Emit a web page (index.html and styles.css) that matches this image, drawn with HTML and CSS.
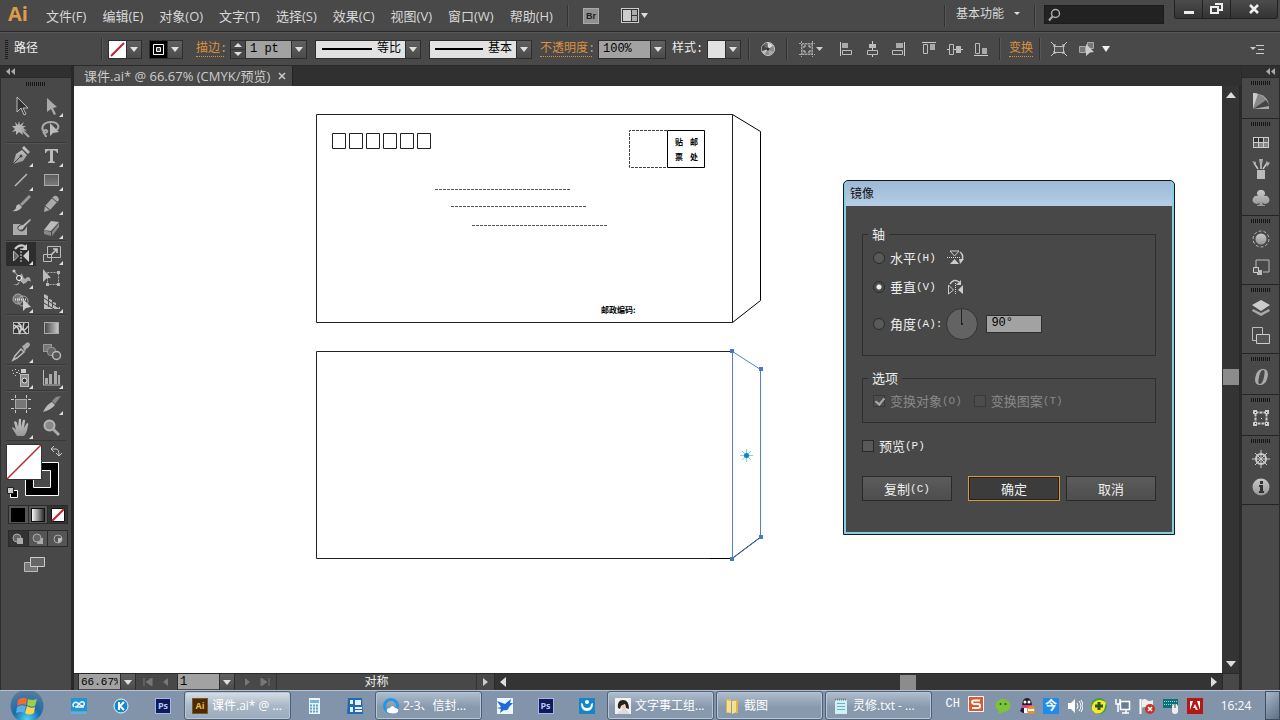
FILE: index.html
```html
<!DOCTYPE html>
<html lang="zh-CN">
<head>
<meta charset="utf-8">
<title>课件.ai</title>
<link rel="stylesheet" href="styles.css">
</head>
<body>
<svg class="defs" aria-hidden="true">
  <defs>
    <linearGradient id="metal" x1="0" y1="0" x2="0" y2="1"><stop offset="0" stop-color="#c8c8c8"/><stop offset="1" stop-color="#969696"/></linearGradient>
    <linearGradient id="dim" x1="0" y1="0" x2="0" y2="1"><stop offset="0" stop-color="#5c5c5c"/><stop offset="1" stop-color="#7c7c7c"/></linearGradient>
    <linearGradient id="ramp"><stop offset="0" stop-color="#fff"/><stop offset="1" stop-color="#222"/></linearGradient>
    <linearGradient id="ramp2"><stop offset="0" stop-color="#444"/><stop offset="1" stop-color="#ccc"/></linearGradient>
    <radialGradient id="orb" cx=".5" cy=".9" r=".9"><stop offset="0" stop-color="#4fd2f4"/><stop offset=".45" stop-color="#1c6ca8"/><stop offset="1" stop-color="#5e7d9b"/></radialGradient>
  </defs>
</svg>

<header class="menubar">
  <div class="logo">Ai</div>
  <nav class="menus">
    <button>文件(F)</button><button>编辑(E)</button><button>对象(O)</button><button>文字(T)</button><button>选择(S)</button><button>效果(C)</button><button>视图(V)</button><button>窗口(W)</button><button>帮助(H)</button>
  </nav>
  <span class="rule"></span>
  <button class="bridge">Br</button>
  <button class="arrange" aria-label="排列文档"><svg width="28" height="16"><rect x=".5" y=".5" width="17" height="14" fill="#333" stroke="#ccc"/><rect x="2" y="2" width="8" height="11" fill="#ccc"/><rect x="11" y="2" width="5" height="5" fill="#aaa"/><rect x="11" y="8" width="5" height="5" fill="#aaa"/><path d="M20 5h7l-3.500 5z" fill="#ddd"/></svg></button>
  <span class="grow"></span>
  <span class="rule"></span>
  <button class="workspace">基本功能<i class="tri small"></i></button>
  <span class="rule"></span>
  <label class="search"><svg width="14" height="14"><circle cx="8.500" cy="5.500" r="4" fill="none" stroke="#aaa" stroke-width="1.500"/><path d="M5.500 8.500L2 12.500" stroke="#aaa" stroke-width="2"/></svg><input type="text" aria-label="搜索"></label>
  <div class="winbtns">
    <button aria-label="最小化"><svg width="12" height="12"><path d="M1 8h10v3H1z" fill="#eee"/></svg></button>
    <button aria-label="还原"><svg width="14" height="12"><path d="M5 1h7v6H9M1 4h7v6H1z" fill="none" stroke="#eee" stroke-width="2"/></svg></button>
    <button class="close" aria-label="关闭"><svg width="12" height="12"><path d="M2 2l8 8M10 2l-8 8" stroke="#eee" stroke-width="2.500"/></svg></button>
  </div>
</header>

<section class="controlbar">
  <i class="vgrip"></i>
  <span class="kind">路径</span>
  <span class="rule"></span>
  <div class="combo"><button class="swatch" aria-label="填色"><svg width="17" height="17"><path fill="#fff" d="M0 0h17v17H0z"/><path d="M2 15L15 2" stroke="#c22030" stroke-width="2"/></svg></button><button class="drop" aria-label="填色选项"><i class="tri"></i></button></div>
  <div class="combo"><button class="swatch" aria-label="描边颜色"><svg width="17" height="17"><path d="M0 0h17v17H0z"/><path d="M3.500 3.500h10v10h-10z" fill="#000" stroke="#fff"/><path d="M6.500 6.500h4v4h-4z" fill="#555" stroke="#fff"/></svg></button><button class="drop" aria-label="描边选项"><i class="tri"></i></button></div>
  <a class="link stroke-link" href="#stroke">描边:</a>
  <div class="combo weight"><button class="spin" aria-label="增减"><svg width="14" height="17"><path d="M3 6h8L7 2zM3 11h8l-4 4z" fill="#ddd"/><path d="M0 8.500h14" stroke="#333"/></svg></button><input class="w-weight" value="1 pt" aria-label="粗细"><button class="drop" aria-label="粗细列表"><i class="tri"></i></button></div>
  <label class="picker"><svg width="50" height="4"><path d="M0 1h50v2H0z"/></svg><select aria-label="宽度配置"><option>等比</option></select><span class="drop"><i class="tri"></i></span></label>
  <label class="picker brush"><svg width="48" height="4"><path d="M0 1h48v2H0z"/></svg><select aria-label="画笔"><option>基本</option></select><span class="drop"><i class="tri"></i></span></label>
  <a class="link opacity-link" href="#opacity">不透明度:</a>
  <div class="combo"><input class="w-opacity" value="100%" aria-label="不透明度"><button class="drop" aria-label="不透明度列表"><i class="tri"></i></button></div>
  <span class="stylelabel">样式:</span>
  <div class="combo"><button class="swatch style" aria-label="图形样式"></button><button class="drop" aria-label="样式列表"><i class="tri"></i></button></div>
  <span class="rule"></span>
  <button class="tb wide" aria-label="重新着色"><svg width="18" height="18"><circle cx="9" cy="9" r="6.500" fill="#888" stroke="#ccc"/><path d="M9 9L9 3A6 6 0 0 1 14 6z" fill="#d8d8d8"/><path d="M9 9L3 11A6 6 0 0 0 6 14z" fill="#c0c0c0"/><path d="M9 9L4 5A6 6 0 0 1 8 3z" fill="#666"/><path d="M9 9l5 3a6 6 0 0 1-4 3z" fill="#aaa"/><path d="M9 9L3 11A6 6 0 0 1 4 5z" fill="#444"/><circle cx="9" cy="9" r="1.500" fill="#333"/></svg></button>
  <span class="rule"></span>
  <button class="tb artb" aria-label="对齐画板"><svg width="26" height="18"><path d="M1 3.500h16M1 14.500h16M3.500 1v16M14.500 1v16" stroke="#aaa" stroke-dasharray="2 1"/><path d="M4 4h10v10H4z" fill="#4a4a4a" stroke="#999"/><path d="M6 8V6h2M10 6h2v2M12 10v2h-2M8 12H6v-2" fill="none" stroke="#ccc"/><path d="M18 7h7l-3.500 4z" fill="#ccc"/></svg></button>
  <div class="aligns">
    <button class="tb" aria-label="左对齐"><svg width="18" height="18"><path d="M3.500 2v14" stroke="#ccc"/><path d="M5 3h6v5H5z" fill="#aaa"/><path d="M5.500 10.500h9v4h-9z" fill="none" stroke="#bbb"/></svg></button>
    <button class="tb" aria-label="水平居中"><svg width="18" height="18"><path d="M9.500 1v16" stroke="#ccc"/><path d="M6 4h7v4H6z" fill="#bbb"/><path d="M4.500 10.500h10v4h-10z" fill="#4a4a4a" stroke="#bbb"/></svg></button>
    <button class="tb" aria-label="右对齐"><svg width="18" height="18"><path d="M15.500 2v14" stroke="#ccc"/><path d="M7 3h7v5H7z" fill="#aaa"/><path d="M3.500 10.500h10v4h-10z" fill="none" stroke="#bbb"/></svg></button>
  </div>
  <div class="aligns second">
    <button class="tb" aria-label="顶对齐"><svg width="18" height="18"><path d="M2 2.500h14" stroke="#ccc"/><path d="M3.500 4.500h4v9h-4z" fill="none" stroke="#bbb"/><path d="M10 4h5v6h-5z" fill="#aaa"/></svg></button>
    <button class="tb" aria-label="垂直居中"><svg width="18" height="18"><path d="M1 9.500h16" stroke="#ccc"/><path d="M3.500 4.500h4v10h-4z" fill="#4a4a4a" stroke="#bbb"/><path d="M10 6h5v7h-5z" fill="#bbb"/></svg></button>
    <button class="tb" aria-label="底对齐"><svg width="18" height="18"><path d="M2 15.500h14" stroke="#ccc"/><path d="M3.500 3.500h4v10h-4z" fill="none" stroke="#bbb"/><path d="M10 8h5v6h-5z" fill="#aaa"/></svg></button>
  </div>
  <span class="rule"></span>
  <a class="link transform-link" href="#transform">变换</a>
  <span class="rule"></span>
  <button class="tb iso" aria-label="隔离"><svg width="18" height="18"><path d="M4.500 6.500h9v6h-9z" fill="#555" stroke="#bbb"/><path d="M1 2l4 4M17 2l-4 4M1 16l4-4M17 16l-4-4M3 6h2V4M15 6h-2V4M3 12h2v2M15 12h-2v2" stroke="#ccc" fill="none"/></svg></button>
  <button class="tb similar" aria-label="选择类似对象"><svg width="34" height="18"><path d="M1.500 6.500h6v6h-6z" fill="#777" stroke="#aaa"/><path d="M9.500 2.500h6v6h-6z" fill="#777" stroke="#aaa"/><path d="M8 4l8 8-4 .5L8 16z" fill="#ccc"/><path d="M24 6h8l-4 6z" fill="#eee"/></svg></button>
  <span class="grow"></span>
  <button class="tb flyout" aria-label="面板菜单"><svg width="18" height="18"><path d="M2 7h6l-3 3z" fill="#ccc"/><path d="M8 5.500h8M10 9.500h6M8 13.500h8" stroke="#ccc"/></svg></button>
</section>

<main class="work">
  <aside class="tools">
    <div class="dockhead"><svg width="10" height="8"><path d="M4 0v7L0 3.500zM9 0v7L5 3.500z" fill="#aaa"/></svg></div>
    <i class="grip"></i>
    <div class="group">
      <button aria-label="选择"><svg class="ico"><path d="M8 3v15l4-4 3 7 2-1-3-6h5z" fill="#333" stroke="#bbb"/></svg></button>
      <button class="fly" aria-label="直接选择"><svg class="ico"><path d="M8 4v14l4-3 3 6 2-1-3-6 4-1z" fill="#aaa"/></svg></button>
      <button aria-label="魔棒"><svg class="ico"><path d="M10 3l1 4 4-3-2 4 4 0-3 2 4 3-5-1 1 5-4-3-3 3 0-4-4 1 3-3-3-3 4 0-1-4 3 3z" fill="#b5b5b5"/><path d="M12 11l8 8" stroke="#aaa" stroke-width="2"/></svg></button>
      <button aria-label="套索"><svg class="ico"><path d="M7 15C0 11 4 4 12 4s9 6 5 8M7 15c3-2 0-4-2-2s2 3 2 6" fill="none" stroke="#aaa" stroke-width="2"/><path d="M11 5v13l3-3 6-1z" fill="#bbb"/></svg></button>
    </div>
    <div class="group">
      <button class="fly" aria-label="钢笔"><svg class="ico"><path d="M4 20l3-10 6-4 5 5-4 6zM13 4l2-2 6 6-2 2z" fill="url(#metal)"/><path d="M4 20l7-7" stroke="#444"/><circle cx="12" cy="12" r="1.500" fill="#444"/></svg></button>
      <button class="fly" aria-label="文字"><svg class="ico"><path d="M6 5h13v4h-1q-.5-2.500-3-2.500h-1V17l2 1v1H9v-1l2-1V6.500h-1Q7.500 6.500 7 9H6z" fill="#bbb"/></svg></button>
      <button class="fly" aria-label="直线段"><svg class="ico"><path d="M6 18L18 6" stroke="#bbb" stroke-width="1.500"/></svg></button>
      <button class="fly" aria-label="矩形"><svg class="ico"><rect x="5.500" y="6.500" width="14" height="11" fill="url(#dim)" stroke="#aaa"/></svg></button>
      <button aria-label="画笔"><svg class="ico"><path d="M20 3l2 2-9 9-2-2z" fill="#999"/><path d="M10 12l3 3q-3 5-10 4 4-1 4-4 0-2 3-3z" fill="#bbb"/></svg></button>
      <button class="fly" aria-label="铅笔"><svg class="ico"><path d="M5 20l1-6L15 4q4-1 5 4L11 18z" fill="#aaa"/><path d="M6 14l5 4M13 6l5 4" stroke="#444"/></svg></button>
      <button aria-label="斑点画笔"><svg class="ico"><path d="M4 8h8q-7 4-1 7 4 2 7-5v9H4z" fill="#aaa"/><path d="M9 13q1-4 5-4l7-6 1 1-7 7q-1 4-6 2z" fill="#bbb"/></svg></button>
      <button class="fly" aria-label="橡皮擦"><svg class="ico"><path d="M5 14l7-9 8 1-8 9z" fill="#bbb"/><path d="M5 14l7 2v4l-7-2zM13 16l7-9v4l-7 9z" fill="#888"/></svg></button>
    </div>
    <div class="group">
      <button class="fly active" aria-label="镜像"><svg class="ico"><path d="M4.500 9v10l5-5z" fill="#666" stroke="#bbb"/><path d="M20 8v12l-6-6z" fill="#ccc"/><path d="M12 6v15" stroke="#ddd" stroke-dasharray="2 1"/><path d="M6 7q5-6 11-2" fill="none" stroke="#ccc" stroke-width="2"/><path d="M18 2v6h-6z" fill="#ccc"/></svg></button>
      <button class="fly" aria-label="比例缩放"><svg class="ico"><path d="M8.500 4.500h13v11h-13zM4.500 12.500h8v7h-8z" fill="none" stroke="#bbb"/><path d="M12 13l6-6M14 7h4v4" fill="none" stroke="#ccc" stroke-width="1.500"/></svg></button>
      <button class="fly" aria-label="宽度"><svg class="ico"><path d="M4 18q6 2 7-6 1-8 3-2 1 4 3 2 4-3 5 4-3-3-5 1-4 1-6-3-1 8-7 4z" fill="#aaa"/><path d="M5 5l10 13" stroke="#bbb"/><circle cx="5" cy="5" r="1.500" fill="#ccc"/><circle cx="10" cy="12" r="2.500" fill="#444" stroke="#fff"/></svg></button>
      <button aria-label="自由变换"><svg class="ico"><path d="M8.500 6.500h11v12h-11z" fill="none" stroke="#aaa" stroke-dasharray="2 1"/><path d="M18 5h3v3h-3zM18 17h3v3h-3zM7 17h3v3H7zM4 3l8 9-4 0-4 4z" fill="#bbb"/></svg></button>
      <button class="fly" aria-label="形状生成器"><svg class="ico"><circle cx="9" cy="9" r="5" fill="#777" stroke="#aaa"/><circle cx="14" cy="11" r="5" fill="none" stroke="#aaa"/><path d="M6 9.500h11" stroke="#ddd" stroke-dasharray="1 1" stroke-width="2"/><path d="M14 9v12l3-3 5-1z" fill="#ccc"/></svg></button>
      <button class="fly" aria-label="透视网格"><svg class="ico"><path d="M5 4l4 2v13H5zM10 9l3 1v9h-3zM14 12l3 1v6h-3zM5 17h16v2H5z" fill="#bbb"/><path d="M5 8l15 10M5 13l10 6" stroke="#444"/></svg></button>
    </div>
    <div class="group">
      <button aria-label="网格"><svg class="ico"><rect x="4.500" y="6.500" width="15" height="11" fill="#333" stroke="#bbb"/><path d="M5 13q4-6 7-1t7-2M9 7q6 3 1 11M15 7q-3 7 3 11M5 9q6 3 5 8" fill="none" stroke="#ccc" stroke-width="1.500"/></svg></button>
      <button aria-label="渐变"><svg class="ico"><rect x="5.500" y="6.500" width="14" height="11" fill="url(#ramp2)" stroke="#aaa"/></svg></button>
      <button class="fly" aria-label="吸管"><svg class="ico"><path d="M13 6l2-1q4-5 6-1 0 3-4 5l-1 3z" fill="#aaa"/><path d="M12 9l3 3-7 6-4 2 2-4z" fill="none" stroke="#bbb" stroke-width="1.500"/></svg></button>
      <button aria-label="混合"><svg class="ico"><rect x="4.500" y="4.500" width="8" height="7" fill="#777" stroke="#999"/><rect x="8.500" y="7.500" width="8" height="8" rx="3" fill="#666" stroke="#999"/><circle cx="17.500" cy="15.500" r="4" fill="#555" stroke="#bbb" stroke-width="1.500"/></svg></button>
    </div>
    <div class="group">
      <button class="fly" aria-label="符号喷枪"><svg class="ico"><path d="M3 4h1v1H3zM6 3h1v1H6zM9 4h1v1H9zM4 7h1v1H4zM7 6h2v1H7zM10 7h1v1h-1zM6 9h1v1H6z" fill="#ccc"/><path d="M12 3h5v4h-5z" fill="#ccc"/><rect x="11.500" y="8.500" width="8" height="12" fill="#888" stroke="#bbb"/><circle cx="15.500" cy="14.500" r="2.500" fill="#333" stroke="#eee"/></svg></button>
      <button class="fly" aria-label="柱形图"><svg class="ico"><path d="M4.500 4v15h17" fill="none" stroke="#bbb"/><path d="M6 12h3v6H6zM10 8h3v10h-3zM15 5h3v13h-3zM19 9h2v9h-2z" fill="#aaa"/></svg></button>
    </div>
    <div class="group">
      <button aria-label="画板"><svg class="ico"><rect x="6.500" y="7.500" width="11" height="9" fill="#777" stroke="#aaa"/><path d="M2 7.500h3M19 7.500h3M2 16.500h3M19 16.500h3M6.500 3v3M17.500 3v3M6.500 18v3M17.500 18v3" stroke="#ccc"/></svg></button>
      <button class="fly" aria-label="切片"><svg class="ico"><path d="M4 20q4-8 9-10l3 3q-4 5-12 7z" fill="#bbb"/><path d="M13 9l4-4 5-1-6 8z" fill="#888"/></svg></button>
      <button class="fly" aria-label="抓手"><svg class="ico"><path d="M8 20q-3-5-5-8 1-2 4 2L5 6q2-2 3 1l1 4 1-8q2-1 2 1v7l2-7q2-1 2 1l-1 7 3-5q2 0 1 2-1 8-4 11z" fill="url(#metal)"/></svg></button>
      <button aria-label="缩放"><svg class="ico"><circle cx="10.500" cy="9.500" r="5" fill="#888" stroke="#b5b5b5" stroke-width="2"/><path d="M14 13l6 6" stroke="#aaa" stroke-width="3"/></svg></button>
    </div>
    <svg class="fillstroke" width="60" height="60">
      <path d="M19.500 20.500h33v33h-33z" fill="#000" stroke="#fff"/><path d="M27.500 28.500h17v17h-17z" fill="#4a4a4a" stroke="#fff"/>
      <path d="M.5 2.500h35v35H.5z" fill="#fff" stroke="#333"/><path d="M1 37L35 3" stroke="#c22030" stroke-width="1.500"/>
      <path d="M45 7h5q3 0 3 6M48 4l-3 3 3 3M50 11l3 3 3-3" fill="none" stroke="#ccc"/>
      <path d="M4.500 48.500h7v7h-7z" stroke="#fff"/><path d="M1.500 45.500h6v6h-6z" fill="#ccc" stroke="#222"/>
    </svg>
    <div class="trio colors">
      <button aria-label="颜色"><svg width="14" height="14"><path d="M0 0h14v14H0z"/></svg></button>
      <button aria-label="渐变"><svg width="14" height="14"><rect x=".5" y=".5" width="13" height="13" fill="url(#ramp)" stroke="#111"/></svg></button>
      <button class="on" aria-label="无"><svg width="14" height="14"><path d="M.5.5h13v13H.5z" fill="#fff" stroke="#111"/><path d="M1 13L13 1" stroke="#c22030" stroke-width="2"/></svg></button>
    </div>
    <div class="trio modes">
      <button class="on" aria-label="正常绘图"><svg width="14" height="12"><circle cx="6" cy="5" r="4" fill="#666" stroke="#aaa"/><path d="M6 5h6v6H6z" fill="#aaa"/></svg></button>
      <button aria-label="背面绘图"><svg width="14" height="12"><path d="M7 5h5v6H6z" fill="#aaa"/><circle cx="6" cy="5" r="4" fill="#666" stroke="#aaa"/></svg></button>
      <button aria-label="内部绘图"><svg width="14" height="12"><circle cx="7" cy="6" r="4" fill="#555" stroke="#aaa"/><path d="M7 5h4q0 4-4 5z" fill="#bbb"/></svg></button>
    </div>
    <button class="screenmode" aria-label="屏幕模式"><svg width="22" height="16"><path d="M.5 5.500h13v9H.5z" fill="#777" stroke="#bbb"/><path d="M6.500.5h14v9h-14z" fill="#666" stroke="#ccc"/></svg></button>
  </aside>

  <section class="document">
    <div class="tabs"><div class="tab"><span>课件.ai* @ 66.67% (CMYK/预览)</span><button aria-label="关闭文档"><svg width="8" height="8"><path d="M1 1l6 6M7 1L1 7" stroke="#ccc" stroke-width="1.500"/></svg></button></div></div>
    <div class="viewport">
      <svg class="canvas">
        <g transform="translate(-74 -86)" fill="none" stroke="#222">
          <path d="M316.500 114.500h416v208h-416z"/>
          <path d="M732.500 114.500l28 17v169l-28 22" stroke="#000"/>
          <path d="M332.500 133.500h13v15h-13zM349.500 133.500h13v15h-13zM366.500 133.500h13v15h-13zM383.500 133.500h13v15h-13zM400.500 133.500h13v15h-13zM417.500 133.500h13v15h-13z"/>
          <path d="M667 130.500h-37.500v37H667" stroke="#444" stroke-dasharray="3 1"/>
          <path d="M667.500 130.500h37v37h-37z" stroke="#000"/>
          <path d="M435 189.500h136M451 206.500h136M472 225.500h136" stroke="#555" stroke-dasharray="3 1"/>
          <g class="print" fill="#000" stroke="none"><text x="675" y="145">贴</text><text x="690" y="145">邮</text><text x="675" y="160">票</text><text x="690" y="160">处</text><text x="601" y="313">邮政编码:</text></g>
          <path d="M732 351.500H316.500v207h416"/>
          <path d="M710 558.500h22l28-21" stroke="#000"/>
          <path d="M732.500 351.500l28 18v168l-28 21z" stroke="#5580c0"/>
          <path d="M730 349h4v4h-4zM759 367h4v4h-4zM759 535h4v4h-4zM730 557h4v4h-4z" fill="#4479c8" stroke="none"/>
          <path d="M740 455.500h13M746.500 449v13M742 451l9 9M751 451l-9 9" stroke="#7fd0f0"/><circle cx="746.500" cy="455.500" r="2.500" fill="#0884c0" stroke="none"/>
        </g>
      </svg>
      <div class="vscroll"><svg width="12" height="8"><path d="M1 7h10L6 1z" fill="#ddd"/></svg><i class="thumb"></i><svg width="12" height="8"><path d="M1 1h10L6 7z" fill="#ddd"/></svg></div>
    </div>
    <footer class="status">
      <div class="combo"><input class="w-zoom" value="66.67%" aria-label="缩放"><button class="drop" aria-label="缩放列表"><i class="tri"></i></button></div>
      <div class="pager"><button aria-label="首页"><svg width="10" height="8"><path d="M1 0v8M9 0v8L3 4z" fill="#777" stroke="#777"/></svg></button><button aria-label="上一页"><svg width="10" height="8"><path d="M7 0v8L2 4z" fill="#777"/></svg></button></div>
      <div class="combo"><input class="w-page" value="1" aria-label="画板"><button class="drop" aria-label="画板列表"><i class="tri"></i></button></div>
      <div class="pager"><button aria-label="下一页"><svg width="10" height="8"><path d="M3 0v8l5-4z" fill="#777"/></svg></button><button aria-label="末页"><svg width="10" height="8"><path d="M9 0v8M1 0v8l6-4z" fill="#777" stroke="#777"/></svg></button></div>
      <span class="toolname">对称</span>
      <button class="more" aria-label="状态选项"><svg width="8" height="10"><path d="M1 1v8l5-4z" fill="#ccc"/></svg></button>
      <div class="hscroll"><svg width="8" height="10"><path d="M7 0v10L1 5z" fill="#ddd"/></svg><i class="thumb"></i><svg width="8" height="10"><path d="M1 0v10l6-5z" fill="#ddd"/></svg></div>
      <span class="corner"></span>
    </footer>
  </section>

  <aside class="dock">
    <div class="dockhead right"><svg width="10" height="8"><path d="M4 0v7L0 3.500zM9 0v7L5 3.500z" fill="#aaa"/></svg></div>
    <div class="panel"><i class="grip"></i><button aria-label="颜色"><svg class="ico"><path d="M4 20V4q15 1 16 13v3z" fill="#aaa"/><path d="M4 20V4q3 0 5 1z" fill="#ccc"/><path d="M4 20L9 5q5 2 8 6z" fill="#888"/><path d="M4 20l13-9q3 4 3 6z" fill="#444"/></svg></button></div>
    <div class="panel"><i class="grip"></i>
      <button aria-label="色板"><svg class="ico"><path d="M4 7h16v11H4z" fill="#ccc"/><path d="M5 8h4v4H5zM10 8h4v4h-4z" fill="#333"/><path d="M15 8h4v4h-4zM5 13h4v4H5z" fill="#666"/><path d="M10 13h4v4h-4zM15 13h4v4h-4z" fill="#888"/></svg></button>
      <button aria-label="画笔"><svg class="ico"><path d="M8 12h8v9H8z" fill="#bbb"/><path d="M9 11L5 5M12 11V2M14 11l4-6" stroke="#ccc" stroke-width="1.500"/><path d="M3 3l4 1v4zM10 1h4l-1 6h-2zM17 3l4 2-3 4z" fill="#aaa"/></svg></button>
      <button aria-label="符号"><svg class="ico"><path d="M12 4a3.500 3.500 0 0 1 3 6 4 4 0 1 1-2 6l1 3h2v1H8v-1h2l1-3a4 4 0 1 1-2-6 3.500 3.500 0 0 1 3-6z" fill="url(#metal)"/></svg></button></div>
    <div class="panel"><i class="grip"></i>
      <button aria-label="外观"><svg class="ico"><circle cx="12" cy="12" r="5.500" fill="url(#metal)"/><circle cx="12" cy="12" r="8" fill="none" stroke="#bbb" stroke-dasharray="3 2"/></svg></button>
      <button aria-label="图形样式"><svg class="ico"><path d="M7 12V5h13v12h-6" fill="none" stroke="#bbb"/><path d="M4.500 12.500h5v5h-5z" fill="#555" stroke="#ccc"/><path d="M10 15h3v5H8v-2h2z" fill="#bbb"/></svg></button></div>
    <div class="panel"><i class="grip"></i>
      <button aria-label="图层"><svg class="ico"><path d="M12 4l9 5-9 6-9-6z" fill="#ccc"/><path d="M4 13l8 4 8-4 1 2-9 5-9-5z" fill="#aaa"/></svg></button>
      <button aria-label="画板"><svg class="ico"><path d="M3.500 3.500h10v13h-10z" fill="none" stroke="#bbb"/><path d="M7.500 10.500h13v9h-13z" fill="#555" stroke="#ccc"/></svg></button></div>
    <div class="panel"><i class="grip"></i><button aria-label="OpenType"><svg class="ico"><path fill-rule="evenodd" d="M14 4c5 0 6 5 4 10-1 4-4 6-7 6-5 0-6-5-4-10 1-4 4-6 7-6zm0 1c-2 0-3 3-4 7-1 5-1 7 1 7s3-3 4-7c1-5 1-7-1-7z" fill="#aaa"/></svg></button></div>
    <div class="panel"><i class="grip"></i><button aria-label="变换"><svg class="ico"><path d="M6.500 6.500h11v11h-11z" fill="none" stroke="#ccc" stroke-width="2" stroke-dasharray="3 1"/><path d="M4 4h4v4H4zM16 4h4v4h-4zM4 16h4v4H4zM16 16h4v4h-4z" fill="#ccc"/><path d="M6 6h1v1H6zM17 6h1v1h-1zM6 17h1v1H6zM17 17h1v1h-1z" fill="#333"/><path d="M12 12h1v1h-1z" fill="#ddd"/></svg></button></div>
    <div class="panel"><i class="grip"></i>
      <button aria-label="导航器"><svg class="ico"><circle cx="12" cy="12" r="5" fill="none" stroke="#ccc" stroke-width="2"/><path d="M12 3v18M3 12h18M6 6l12 12M18 6L6 18" stroke="#ccc"/></svg></button>
      <button aria-label="信息"><svg class="ico"><circle cx="12" cy="12" r="8.500" fill="url(#metal)"/><path d="M11 6h3v3h-3zM10 10h4v6h1v2h-5v-2h1v-4h-1z" fill="#333"/></svg></button></div>
  </aside>
</main>

<footer class="taskbar">
  <button class="start" aria-label="开始"><svg width="36" height="30"><circle cx="18" cy="15" r="16.500" fill="url(#orb)"/><path d="M9 9q5-4 9-1l-1 6q-5-2-9 1z" fill="#f06b31"/><path d="M19 8q4 2 9 0l-2 7q-4 2-8-1z" fill="#a2cd4b"/><path d="M8 16q4-3 9-1l-2 7q-3-2-8 0z" fill="#5aaee8"/><path d="M18 15q4 3 8 1l-1 6q-5 3-9 0z" fill="#fcd350"/></svg></button>
  <button class="pin" aria-label="云盘"><svg class="app"><path fill="#2294d2" d="M0 0h16v13H0z"/><path d="M3 9q-2-2 0-4 2-2 5 1t5 1q1-2-1-3-2-1-4 2T4 9h9" fill="none" stroke="#e8f6ff" stroke-width="1.500"/><path fill="#55b4e4" d="M0 14h16v2H0z"/></svg></button>
  <button class="pin" aria-label="酷狗"><svg class="app"><circle cx="8" cy="8" r="7" fill="#1589cc" stroke="#e8f6ff"/><path d="M6 4v8M11 4L7 8l4 4" fill="none" stroke="#fff" stroke-width="2"/></svg></button>
  <button class="pin" aria-label="Photoshop"><span class="ps">Ps</span></button>
  <button class="task current"><span class="ps ai">Ai</span><span>课件.ai* @ ...</span></button>
  <button class="pin" aria-label="计算器"><svg class="app"><path fill="#eaf4fa" d="M3 0h11v16H3z"/><path fill="#79b5d8" d="M4 2h9v3H4z"/><path d="M4 7.500h9M4 10.500h9M4 13.500h9" stroke="#5fa0c8" stroke-dasharray="2 1" stroke-width="2"/></svg></button>
  <button class="pin" aria-label="列表"><svg class="app"><path fill="#2468b8" d="M1 0h14l1 16H0z"/><path fill="#e8f2ff" d="M3 2h3v4H3zM3 9h3v5H3zM8 2h6v5H8zM8 9h7v2H8zM8 12h7v2H8z"/></svg></button>
  <button class="task"><svg class="app"><circle cx="8" cy="8" r="6.500" fill="none" stroke="#2497ea" stroke-width="3"/><path d="M4 14q-1-4 3-4 2-4 5 0 4 0 3 4-5 3-11 0z" fill="#fff"/></svg><span>2-3、信封...</span></button>
  <button class="pin" aria-label="迅雷"><svg class="app"><path fill="#eef6ff" d="M0 0h16v16H0z"/><path fill="#1d6dd8" d="M0 3l8 3 6-5-1 4 3 0-4 4q-1 4-5 3l-4 3 1-4-4-1 4-1z"/></svg></button>
  <button class="pin" aria-label="Photoshop 窗口"><span class="ps">Ps</span></button>
  <button class="pin" aria-label="助手"><svg class="app"><path fill="#1585c8" d="M0 0h16v16H0z"/><circle cx="8" cy="4" r="2" fill="#fff"/><path d="M2 5q0 8 6 8t6-8l-2 1q0 4-4 4T4 6z" fill="#fff"/></svg></button>
  <button class="task"><svg class="app"><path fill="#f3f0f0" d="M0 0h16v16H0z"/><path d="M3 10q-1-8 5-8t6 9l-3-1-1-4-4 2-1 3z" fill="#222"/><path d="M6 8l4-2 1 5q-2 3-4 0z" fill="#f4cdbd"/><path d="M2 16q1-3 5-4l5 0 3 4z" fill="#d8dce8"/></svg><span>文字事工组...</span></button>
  <button class="task"><svg class="app"><path fill="#d8b84c" d="M2 1h5v14H2zM10 2h4v13h-4z"/><path fill="#f5e08c" d="M3 2l4 1v12l-4-1zM8 3h4v11l-4 2z"/></svg><span>截图</span></button>
  <button class="task"><svg class="app"><path fill="#d2f0f4" d="M2 2h12v14H2z"/><path d="M4 5.500h8M4 8.500h8M4 11.500h8" stroke="#5fb5c4"/><path d="M2 1.500h12" stroke="#777" stroke-dasharray="1 1" stroke-width="2"/></svg><span>灵修.txt - ...</span></button>
  <span class="grow"></span>
  <span class="lang">CH</span>
  <button class="tray sogou" aria-label="输入法"><svg class="app"><rect width="16" height="16" rx="1" fill="#fff"/><rect x="1" y="1" width="14" height="14" fill="#e2562c"/><path d="M12 4.500H6Q4 4.500 4 6t2 2h4q2 0 2 2t-2 2H4" fill="none" stroke="#fff" stroke-width="2"/></svg></button>
  <button class="tray" aria-label="微信"><svg class="app"><ellipse cx="8" cy="7.500" rx="7.500" ry="6.500" fill="#7cc433"/><path d="M4 12l-1 4 5-2z" fill="#7cc433"/><circle cx="5.500" cy="6" r="1" fill="#244"/><circle cx="10.500" cy="6" r="1" fill="#244"/></svg></button>
  <button class="tray" aria-label="QQ"><svg class="app"><path d="M3 9q0-9 5-9t5 9l2 4-3 2H4l-3-2z" fill="#281b25"/><path d="M5 9h6v6H5z" fill="#fff"/><path d="M3 7h10v3H3z" fill="#d9409c"/><circle cx="6" cy="4" r="1.500" fill="#fff"/><circle cx="10" cy="4" r="1.500" fill="#fff"/><circle cx="12" cy="12" r="4" fill="#f28c28"/><path d="M9 12h6" stroke="#fff" stroke-width="2"/></svg></button>
  <button class="tray" aria-label="今日"><span class="today">今</span></button>
  <button class="tray" aria-label="音量"><svg class="app"><path d="M1 5h3l4-4v14l-4-4H1z" fill="#fff"/><path d="M10 5q2 3 0 6M12 3q4 5 0 10M14 2q4 6 0 12" fill="none" stroke="#fff"/></svg></button>
  <button class="tray" aria-label="安全卫士"><svg class="app"><circle cx="8" cy="8" r="8" fill="#3da43a"/><path d="M1 12A8 8 0 0 1 15 5l-2 7Q9 17 4 15z" fill="#ffe52b"/><path d="M8 4v8M4 8h8" stroke="#225c1c" stroke-width="3"/></svg></button>
  <button class="tray" aria-label="网络"><svg class="app"><path d="M5.500 3.500h9v8h-9z" fill="#667d96" stroke="#fff" stroke-width="1.500"/><path d="M7 15h7M11 12v3M1 1v5h4V1M3 6v8" fill="none" stroke="#fff" stroke-width="1.500"/></svg></button>
  <button class="tray" aria-label="操作中心"><svg class="app"><path d="M1.500 1v15" stroke="#fff" stroke-width="2"/><path d="M3 2q3-2 5 0t6 0v8q-3 2-6 0t-5 0z" fill="#eee"/><circle cx="11" cy="11" r="5" fill="#cc3127"/><path d="M9 9l4 4M13 9l-4 4" stroke="#fff" stroke-width="1.500"/></svg></button>
  <button class="tray" aria-label="键盘"><svg class="app"><path fill="#116f78" d="M0 1h15v9H0z"/><path d="M1 3.500h13M1 6.500h13" stroke="#8ee0dc" stroke-dasharray="1 1"/><rect x="9" y="6" width="6" height="10" rx="3" fill="#eee"/><path d="M12 6v4" stroke="#444"/></svg></button>
  <button class="tray" aria-label="Adobe"><svg class="app"><path fill="#b51712" d="M0 0h16v16H0z"/><path fill="#fff" d="M3 3h3L3 12zM10 3h3v9zM8 6l3 6H9L8 10H6z"/></svg></button>
  <time class="clock">16:24</time>
  <button class="desktop" aria-label="显示桌面"></button>
</footer>

<form class="dialog" role="dialog" aria-label="镜像">
  <h2>镜像</h2>
  <div class="dialog-body">
    <fieldset class="axis">
      <legend>轴</legend>
      <div class="line"><label><input type="radio" name="axis">水平<span>(H)</span></label><svg width="18" height="16"><path d="M3 1h9L7.500 6z" fill="none" stroke="#ccc"/><path d="M3 14h9L7.500 9z" fill="#ccc"/><path d="M0 7.500h13" stroke="#ddd" stroke-dasharray="1 1"/><path d="M13 2q4 3 2 8" fill="none" stroke="#ccc" stroke-width="1.500"/><path d="M12 9h5l-4 5z" fill="#ccc"/></svg></div>
      <div class="line"><label><input type="radio" name="axis" checked>垂直<span>(V)</span></label><svg width="18" height="16"><path d="M1.500 6v9l5-4z" fill="none" stroke="#ccc"/><path d="M16 6v9l-5-4z" fill="#ccc"/><path d="M8.500 4v12" stroke="#ddd" stroke-dasharray="1 1"/><path d="M3 5q4-6 9-2" fill="none" stroke="#ccc" stroke-width="1.500"/><path d="M14 1v5H9z" fill="#ccc"/></svg></div>
      <div class="line angle"><label><input type="radio" name="axis">角度<span>(A):</span></label><svg width="34" height="34"><circle cx="17" cy="17" r="15.500" fill="#636363" stroke="#333"/><path d="M16.500 2v15" stroke="#222"/><circle cx="17" cy="17" r="1" fill="#111"/></svg><input type="text" value="90°" aria-label="角度"></div>
    </fieldset>
    <fieldset class="options">
      <legend>选项</legend>
      <label><input type="checkbox" checked disabled>变换对象<span>(O)</span></label>
      <label><input type="checkbox" disabled>变换图案<span>(T)</span></label>
    </fieldset>
    <label class="preview"><input type="checkbox">预览<span>(P)</span></label>
    <div class="actions"><button type="button">复制<span>(C)</span></button><button type="button" class="ok">确定</button><button type="button">取消</button></div>
  </div>
</form>
</body>
</html>
```
FILE: styles.css
```css
* { box-sizing: border-box; }
html, body { height: 100%; }
body {
  margin: 0;
  display: flex;
  flex-direction: column;
  position: relative;
  overflow: hidden;
  background: #484848;
  color: #d8d8d8;
  font: 13px/16px "Open Sans", "Noto Sans CJK SC", sans-serif;
}
button, input, select { font: inherit; color: inherit; margin: 0; padding: 0; border: 0; background: none; border-radius: 0; }
button { display: flex; align-items: center; justify-content: center; }
svg { display: block; flex: none; }
.defs { position: absolute; width: 0; height: 0; }
.grow { flex: 1; }
.ico { width: 24px; height: 24px; }
.rule { width: 2px; height: 22px; border-left: 1px solid #323232; border-right: 1px solid #575757; flex: none; }
.tri { display: block; border: 4px solid transparent; border-top: 5px solid #e0e0e0; border-bottom: 0; }
.tri.small { border-width: 3px; border-top-width: 3px; border-bottom: 0; }

/* menu bar */
.menubar { height: 32px; flex: none; display: flex; align-items: center; border-bottom: 1px solid #2a2a2a; background: #494949; }
.logo { width: 38px; padding: 0 0 4px 8px; font: bold 20px/24px "Open Sans", sans-serif; color: #dc9c48; }
.menus { display: flex; margin-right: 6px; }
.menus button { padding: 0 8px; white-space: nowrap; }
.bridge { width: 16px; height: 16px; margin-left: 14px; background: #909090; border: 1px solid #aaa; color: #222; font: bold 9px/12px "Liberation Sans", sans-serif; }
.arrange { margin-left: 22px; }
.workspace { gap: 10px; padding: 0 14px 4px 10px; font-size: 12px; }
.search { display: flex; align-items: center; width: 120px; height: 19px; margin: 0 10px 2px 8px; padding-left: 2px; background: #222; border: 1px solid #1c1c1c; }
.search input { flex: 1; min-width: 0; }
.winbtns { display: flex; align-self: flex-start; height: 19px; margin-right: 2px; border: 1px solid #222; border-top: 0; border-radius: 0 0 3px 3px; background: linear-gradient(#4c4c4c, #333); }
.winbtns button { width: 28px; border-right: 1px solid #222; }
.winbtns .close { width: 46px; border: 0; }

/* control bar */
.controlbar { height: 34px; flex: none; display: flex; align-items: center; border-top: 1px solid #585858; border-bottom: 1px solid #2a2a2a; background: #494949; font: 12px/16px "Liberation Mono", "Noto Sans CJK SC", monospace; }
.vgrip { width: 3px; height: 19px; margin: 0 6px 0 5px; background: repeating-linear-gradient(#1d1d1d 0 1px, #494949 1px 2px); }
.kind { width: 87px; color: #eee; }
.combo { display: flex; height: 19px; flex: none; border: 1px solid #2e2e2e; }
.controlbar > .rule + .combo { margin-left: 5px; }
.controlbar > .combo + .combo { margin-left: 7px; }
.swatch { width: 17px; background: #e2e2e2; }
.drop { display: flex; align-items: center; justify-content: center; flex: none; width: 15px; border-left: 1px solid #2e2e2e; background: linear-gradient(#606060, #4b4b4b); }
.combo input { height: 17px; padding: 0 4px; background: #a2a2a2; color: #000; }
.link { color: #dc913f; text-decoration: none; border-bottom: 1px dotted #dc913f; padding-top: 1px; line-height: 14px; white-space: nowrap; }
.stroke-link { width: 28px; margin-left: 13px; margin-right: 6px; }
.spin { width: 15px; border-right: 1px solid #2e2e2e; }
.w-weight { width: 45px; }
.picker { display: flex; align-items: center; flex: none; height: 19px; margin-left: 8px; padding-left: 6px; border: 1px solid #2e2e2e; background: #e2e2e2; color: #000; }
.picker select { width: 33px; height: 17px; padding-left: 5px; appearance: none; font-size: 12px; }
.picker .drop { align-self: stretch; color: #ddd; }
.picker.brush { padding-left: 5px; }
.opacity-link { width: 52px; margin: 0 6px 0 8px; }
.w-opacity { width: 51px; }
.stylelabel { width: 35px; margin-left: 6px; color: #eee; white-space: nowrap; }
.controlbar > .combo + .rule { margin-left: 7px; }
.tb { width: 26px; height: 22px; flex: none; }
.tb.wide { width: 36px; }
.tb.artb { width: 45px; }
.aligns { display: flex; }
.aligns.second { margin: 0 5px; }
.transform-link { margin: 0 6px 0 8px; }
.tb.iso { width: 36px; }
.tb.similar { width: 36px; }
.tb.flyout { margin-right: 10px; }

/* workspace */
.work { flex: 1; min-height: 0; display: flex; background: #2a2a2a; }
.dockhead { height: 12px; display: flex; align-items: center; padding-left: 5px; background: #303030; border-bottom: 1px solid #2a2a2a; }
.dockhead.right { justify-content: flex-end; padding-right: 3px; }
.grip { display: block; width: 19px; height: 4px; margin: 3px auto 2px; background: repeating-linear-gradient(90deg, #161616 0 1px, #494949 1px 2px); }
.tools { width: 74px; flex: none; background: #484848; border-left: 1px solid #2e2e2e; border-right: 3px solid #282828; }
.tools > .grip { margin: 4px auto 7px 25px; }
.group { display: grid; grid-template-columns: 30px 30px; grid-auto-rows: 24px; width: 60px; margin-left: 5px; border-bottom: 1px solid #383838; border-top: 1px solid #545454; }
.tools > .grip + .group { border-top-color: transparent; }
.group button { position: relative; }
.group .fly::after { content: ""; position: absolute; right: 3px; bottom: 1px; border: 2px solid transparent; border-right-color: #ddd; border-bottom-color: #ddd; }
.group .active { background: #2d2d2d; }
.fillstroke { margin: 1px 0 0 5px; }
.trio { display: flex; width: 60px; margin-left: 7px; border: 1px solid #2a2a2a; }
.trio button { flex: 1; border-right: 1px solid #2a2a2a; background: #555; }
.trio button:last-child { border-right: 0; }
.trio .on { background: #333; }
.colors { height: 19px; margin-top: 3px; }
.modes { height: 17px; margin-top: 6px; }
.screenmode { margin: 10px 0 0 23px; }

.document { flex: 1; min-width: 0; display: flex; flex-direction: column; }
.tabs { height: 20px; flex: none; display: flex; background: #303030; }
.tab { display: flex; align-items: center; gap: 8px; padding: 0 6px 0 10px; background: #494949; border-right: 1px solid #222; white-space: nowrap; color: #ccc; }
.viewport { flex: 1; min-height: 0; display: flex; }
.canvas { flex: 1; min-width: 0; height: 100%; background: #fff; overflow: hidden; }
.print { font: bold 8px "Noto Sans CJK SC", sans-serif; }
.vscroll { width: 19px; flex: none; display: flex; flex-direction: column; justify-content: space-between; align-items: center; padding: 5px 1px 5px 1px; background: #343434; border-right: 2px solid #282828; }
.thumb { display: block; width: 16px; height: 16px; background: #8c8c8c; }
.vscroll .thumb { margin-bottom: 5px; }
.status { height: 17px; flex: none; display: flex; align-items: stretch; background: #484848; border-top: 1px solid #2a2a2a; font: 12px/18px "Liberation Mono", "Noto Sans CJK SC", monospace; }
.status .combo { height: 16px; border-width: 0 1px; }
.status .combo:first-child { margin-left: 4px; }
.status .combo input { height: 15px; padding: 0 2px; }
.w-zoom { width: 41px; font-size: 11px; }
.w-page { width: 41px; }
.pager { display: flex; gap: 8px; margin: 0 6px 0 7px; }
.toolname { width: 200px; border-left: 1px solid #333; text-align: center; color: #eee; }
.more { width: 19px; border-left: 1px solid #333; border-right: 1px solid #2a2a2a; }
.hscroll { flex: 1; display: flex; align-items: center; justify-content: space-between; padding: 0 4px; background: #343434; }
.hscroll .thumb { height: 15px; margin-left: 98px; }
.corner { width: 19px; border-left: 1px solid #282828; border-right: 2px solid #282828; }

.dock { width: 39px; flex: none; background: #494949; border-left: 1px solid #2a2a2a; border-right: 1px solid #2a2a2a; }
.panel { padding-bottom: 3px; border-bottom: 1px solid #252525; }
.panel button { width: 100%; height: 28px; }

/* task bar */
.taskbar { height: 30px; flex: none; display: flex; align-items: stretch; background: #8294aa; border-top: 1px solid #b4c2d2; color: #fff; overflow: hidden; }
.start { width: 54px; flex: none; margin-right: 4px; }
.pin { width: 42px; flex: none; }
.task ~ .pin { width: 41px; }
.app { width: 16px; height: 16px; }
.ps { width: 16px; height: 16px; flex: none; background: #101a55; border: 1px solid #a4b4f0; color: #b4c8ff; text-align: center; font: bold 9px/14px "Open Sans", sans-serif; }
.ps.ai { background: #492c06; border-color: #7c561d; color: #f0b352; }
.task { width: 107px; flex: none; justify-content: flex-start; gap: 4px; padding-left: 7px; margin-right: 2px; border: 1px solid #4e6077; border-radius: 3px; box-shadow: inset 0 0 0 1px #b9c6d5; background: linear-gradient(#b0bfce, #8999ad 55%, #8999ad); white-space: nowrap; overflow: hidden; font-size: 12px; }
.task.current { background: linear-gradient(#d8e0e8, #aab8c6 50%, #9babbd); }
.lang { align-self: center; font: 12px/16px "Liberation Mono", monospace; padding-bottom: 4px; }
.tray { width: 24px; flex: none; }
.tray.sogou { width: 31px; padding-bottom: 4px; }
.today { width: 16px; height: 16px; background: #1d8ceb; font-weight: bold; font-size: 12px; line-height: 15px; text-align: center; }
.clock { width: 58px; flex: none; align-self: center; text-align: center; font-size: 12px; }
.desktop { width: 15px; flex: none; border: 1px solid #3f4f63; background: linear-gradient(135deg, #a9b6c5, #5d6f85); }

/* reflect dialog */
.dialog { position: absolute; left: 843px; top: 180px; width: 332px; border: 1px solid #101820; border-radius: 5px 5px 0 0; background: #88cfe2; padding: 0 2px 2px; color: #eee; }
.dialog h2 { margin: 0; height: 25px; padding-left: 4px; border-radius: 4px 4px 0 0; background: linear-gradient(#9cb9d6, #b6cde5); color: #111; font-size: 12px; line-height: 25px; font-weight: normal; }
.dialog-body { padding: 19px 16px 31px; background: #484848; }
.dialog span { font: 11px/16px "Liberation Mono", monospace; }
.dialog fieldset { margin: 0; border: 1px solid #2e2e2e; min-width: 0; }
.dialog legend { padding: 0 4px; margin-left: -5px; line-height: 18px; }
.dialog label { display: flex; align-items: center; white-space: nowrap; }
.dialog .axis { height: 131px; padding: 0 10px; }
.line { display: flex; align-items: center; height: 29px; gap: 11px; }
.line.angle { height: 45px; gap: 3px; }
.line.angle input[type="text"] { width: 56px; height: 18px; margin-left: 4px; padding: 0 4px 2px; border: 1px solid #2e2e2e; background: #a2a2a2; color: #000; font: 12px/14px "Liberation Mono", monospace; }
.dialog input[type="radio"] { appearance: none; width: 12px; height: 12px; margin-right: 5px; border: 1px solid #2a2a2a; border-radius: 50%; background: #595959; }
.dialog input[type="radio"]:checked { background: radial-gradient(#eee 0 2px, #4d4d4d 3px); }
.dialog input[type="checkbox"] { appearance: none; width: 12px; height: 12px; margin-right: 5px; border: 1px solid #2a2a2a; background: #585858; position: relative; }
.dialog input:disabled { border-color: #383838; background: #4c4c4c; }
.dialog input[type="checkbox"]:checked::after { content: ""; position: absolute; left: 3px; top: 0; width: 4px; height: 7px; border: solid #aaa; border-width: 0 2px 2px 0; transform: rotate(40deg); }
.dialog .options { display: flex; gap: 12px; height: 54px; margin-top: 13px; padding: 6px 10px 0; }
.options label { color: #888; height: 16px; }
.dialog .preview { margin-top: 15px; height: 16px; }
.actions { display: flex; margin-top: 22px; }
.actions button { width: 90px; height: 25px; border: 1px solid #2a2a2a; background: linear-gradient(#5c5c5c, #4d4d4d); }
.actions .ok { width: 92px; margin: 0 6px 0 16px; border-color: #d8963f; background: #3c3c3c; box-shadow: inset 0 0 0 1px #222; }
```
